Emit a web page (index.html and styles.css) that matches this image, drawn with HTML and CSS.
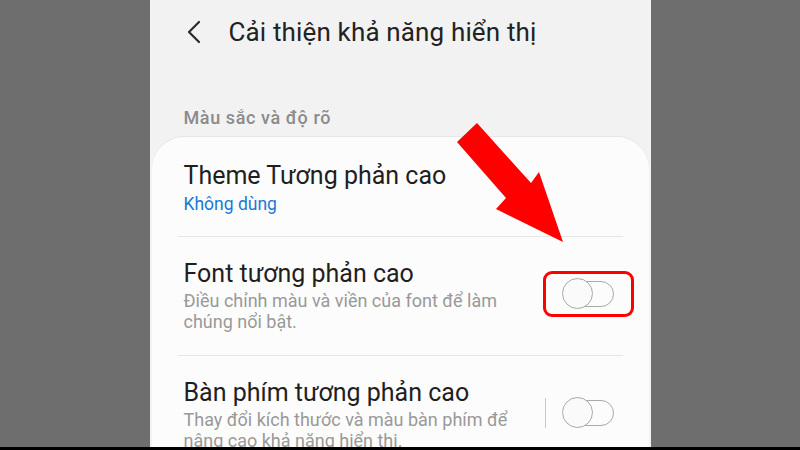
FILE: index.html
```html
<!DOCTYPE html>
<html lang="vi">
<head>
<meta charset="utf-8">
<title>Cải thiện khả năng hiển thị</title>
<link rel="stylesheet" href="styles.css">
</head>
<body>
<div class="frame">
  <div class="side"></div>
  <main class="phone">
    <header class="appbar">
      <svg class="back" width="16" height="24" viewBox="0 0 16 24"><path d="M13 2 L3 12 L13 22" fill="none" stroke="#2b2b2b" stroke-width="2.2" stroke-linecap="round" stroke-linejoin="round"/></svg>
      <h1 class="title">Cải thiện khả năng hiển thị</h1>
    </header>
    <div class="section-label">Màu sắc và độ rõ</div>
    <section class="card">
      <div class="row">
        <div class="text">
          <div class="row-title">Theme Tương phản cao</div>
          <div class="row-value">Không dùng</div>
        </div>
      </div>
      <div class="row">
        <div class="text">
          <div class="row-title">Font tương phản cao</div>
          <div class="row-sub">Điều chỉnh màu và viền của font để làm chúng nổi bật.</div>
        </div>
        <div class="control">
          <span class="spacer"></span>
          <span class="toggle highlight"><span class="knob"></span></span>
        </div>
      </div>
      <div class="row">
        <div class="text">
          <div class="row-title">Bàn phím tương phản cao</div>
          <div class="row-sub">Thay đổi kích thước và màu bàn phím để nâng cao khả năng hiển thị.</div>
        </div>
        <div class="control">
          <span class="vdiv"></span>
          <span class="toggle"><span class="knob"></span></span>
        </div>
      </div>
    </section>
    <svg class="arrow" width="120" height="130" viewBox="450 118 120 130"><polygon points="477,123 531,183 539,172 563,242 496,209 506,198 457,142" fill="#ff0000"/></svg>
  </main>
  <div class="side"></div>
</div>
</body>
</html>
```
FILE: styles.css
```css
* { box-sizing: border-box; }
html, body { margin: 0; padding: 0; }
body { width: 800px; height: 450px; overflow: hidden; background: #000; font-family: Roboto, "Noto Sans", "Liberation Sans", sans-serif; }
.frame { display: flex; height: 450px; border-bottom: 3px solid #000; }
.side { flex: 1; background: #6f6e6e; }
.phone { position: relative; width: 501px; background: #f2f2f2; overflow: hidden; }
.appbar { display: flex; align-items: center; height: 64px; padding: 0 0 0 36px; }
.back { display: block; }
.title { margin: 0 0 0 27px; font-size: 26px; font-weight: 400; color: #222; letter-spacing: 0.15px; }
.section-label { margin: 42px 0 0 34px; font-size: 18px; font-weight: 500; color: #8b8b8b; line-height: 24px; letter-spacing: 0.6px; }
.card { margin: 7px 2px 0 2px; background: #fcfcfc; border-radius: 32px 32px 0 0; box-shadow: 0 -1px 0 #e6e6e6; padding-top: 1px; }
.row { display: flex; align-items: center; margin: 0 26px; padding: 22px 0 23px 6px; border-top: 1px solid #e6e6e6; }
.row:first-child { border-top: none; padding-top: 23px; padding-bottom: 21px; }
.text { flex: 1; }
.row-title { font-size: 25px; line-height: 30px; color: #1f1f1f; }
.row-value { font-size: 17.5px; line-height: 22px; color: #1a78d4; margin-top: 2px; }
.row-sub { font-size: 18px; line-height: 21px; color: #999; margin-top: 1px; padding-right: 10px; }
.control { display: flex; align-items: center; margin-right: 9px; margin-top: -4px; }
.spacer { width: 1px; height: 30px; margin-right: 17px; }
.vdiv { width: 1px; height: 30px; background: #c8c8c8; margin-right: 17px; }
.toggle { position: relative; display: block; width: 51px; height: 26px; border: 1.5px solid #a9a9a9; border-radius: 13px; }
.knob { position: absolute; left: -1.5px; top: -4px; width: 31px; height: 31px; border: 1.5px solid #a9a9a9; border-radius: 50%; background: #fafafa; }
.highlight::after { content: ""; position: absolute; left: -21px; right: -21px; top: -11px; bottom: -11px; border: 3.5px solid #f00; border-radius: 9px; }
.arrow { position: absolute; left: 300px; top: 118px; }
```
